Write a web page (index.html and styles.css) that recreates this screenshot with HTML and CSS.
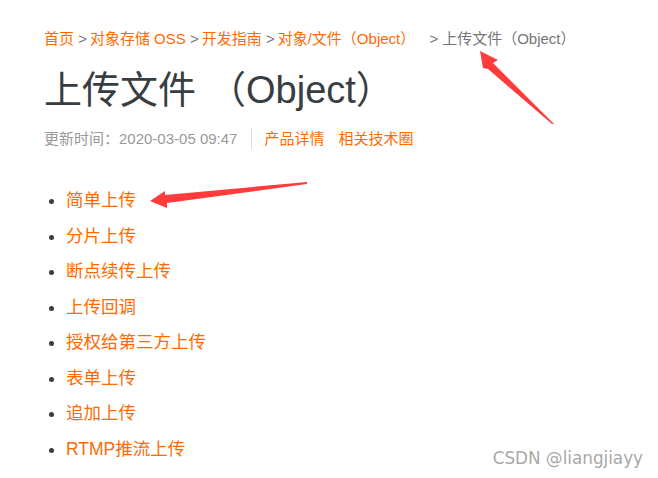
FILE: index.html
```html
<!DOCTYPE html>
<html lang="zh-CN">
<head>
  <meta charset="UTF-8">
  <title>上传文件（Object）</title>
  <link rel="stylesheet" href="styles.css">
</head>
<body>
  <div class="page">
    <div class="crumbs">
      <a href="#">首页</a>
      <span class="sep">&gt;</span><a href="#">对象存储 OSS</a>
      <span class="sep">&gt;</span><a href="#">开发指南</a>
      <span class="sep">&gt;</span><a href="#">对象/文件（Object）</a>
      <span class="sep wide">&gt;</span><span class="cur">上传文件（Object）</span>
    </div>
    <h1 class="title">上传文件<span class="paren">（Object）</span></h1>
    <div class="meta">
      <span class="date">更新时间：2020-03-05 09:47</span>
      <span class="bar"></span>
      <a href="#">产品详情</a>
      <a href="#">相关技术圈</a>
    </div>
    <ul class="toc">
      <li><a href="#">简单上传</a></li>
      <li><a href="#">分片上传</a></li>
      <li><a href="#">断点续传上传</a></li>
      <li><a href="#">上传回调</a></li>
      <li><a href="#">授权给第三方上传</a></li>
      <li><a href="#">表单上传</a></li>
      <li><a href="#">追加上传</a></li>
      <li><a href="#">RTMP推流上传</a></li>
    </ul>
  </div>

  <!-- 标注箭头 -->
  <svg class="marks" width="658" height="478" viewBox="0 0 658 478">
    <polygon points="480,51 498,60 493,63 554,124 552,124 488,69 483,68" fill="#ff3b3b"/>
    <polygon points="150,201 165,191 165,195 307,182 307,184 167,203 167,208" fill="#ff3b3b"/>
  </svg>

  <div class="wm">CSDN @liangjiayy</div>
</body>
</html>
```

FILE: styles.css
```css
* {
  margin: 0;
  padding: 0;
}
body {
  background: #fff;
  font-family: "Liberation Sans", "Noto Sans CJK SC", sans-serif;
  color: #373d41;
}
a {
  color: #ff6a00;
  text-decoration: none;
}
.page {
  padding: 29px 0 0 44px;
}
.crumbs {
  font-size: 15px;
  line-height: 20px;
  color: #73777a;
}
.crumbs .sep {
  margin-right: 3px;
}
.crumbs .sep.wide {
  margin-left: 10px;
  margin-right: 4px;
}
.title {
  font-size: 38px;
  font-weight: normal;
  line-height: 50px;
  margin-top: 16px;
  color: #373d41;
}
.title .paren {
  margin-left: 12px;
}
.meta {
  display: flex;
  align-items: center;
  font-size: 15px;
  line-height: 20px;
  margin-top: 13px;
}
.meta .date {
  color: #999;
}
.meta .bar {
  width: 1px;
  height: 21px;
  background: #ddd;
  margin: 0 12px 0 14px;
}
.meta a {
  margin-right: 14px;
}
.toc {
  margin-top: 39px;
  padding-left: 22px;
}
.toc li {
  font-size: 17.5px;
  line-height: 25px;
  margin-bottom: 10.5px;
  color: #373d41;
}
.marks {
  position: absolute;
  left: 0;
  top: 0;
  pointer-events: none;
}
.wm {
  position: absolute;
  right: 15px;
  top: 447px;
  font-size: 16.8px;
  line-height: 22px;
  color: #a8a8a8;
  font-family: "DejaVu Sans", sans-serif;
}
```
